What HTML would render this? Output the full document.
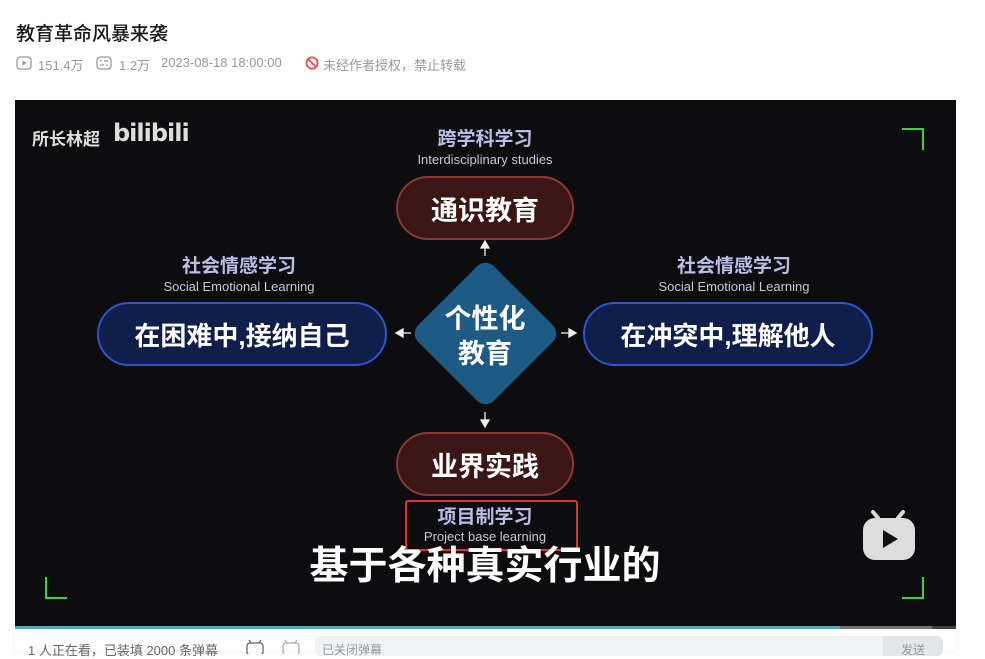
<!DOCTYPE html>
<html><head><meta charset="utf-8"><style>
*{margin:0;padding:0;box-sizing:border-box}
body{width:985px;height:651px;overflow:hidden;background:#fff;font-family:"Liberation Sans","Noto Sans CJK SC",sans-serif;position:relative}
.a{position:absolute}
.title{left:16px;top:19px;font-size:19px;color:#18191c;font-weight:500}
.meta{top:55px;font-size:13px;color:#9499a0}
.v{left:15px;top:100px;width:941px;height:527px;background:#0d0d10;overflow:hidden}
.pill{position:absolute;border-radius:34px;color:#fff;font-weight:bold;display:flex;align-items:center;justify-content:center;font-size:27px}
.red{background:#3a1714;border:2px solid #8a3a33}
.blue{background:#0f1e4a;border:2px solid #2f55c9}
.h{position:absolute;text-align:center;color:#b9bde8;font-weight:bold;font-size:19px}
.s{position:absolute;text-align:center;color:#c6c8d6;font-size:13px}
.c{position:absolute;width:22px;height:22px;border-color:#3fd24a;border-style:solid;border-width:0}
</style></head><body>
<div class="a title">教育革命风暴来袭</div>
<svg class="a" style="left:16px;top:56px" width="16" height="14"><rect x="1" y="1" width="14" height="12" rx="3" fill="none" stroke="#9499a0" stroke-width="1.3"/><path d="M6.5 4.5v5l4-2.5z" fill="#9499a0"/></svg>
<div class="a meta" style="left:38px">151.4万</div>
<svg class="a" style="left:96px;top:56px" width="16" height="14"><rect x="1" y="1" width="14" height="12" rx="3" fill="none" stroke="#9499a0" stroke-width="1.3"/><path d="M4 5h2M8 5h4M4 9h4M10 9h2" stroke="#9499a0" stroke-width="1.3"/></svg>
<div class="a meta" style="left:119px">1.2万</div>
<div class="a meta" style="left:161px">2023-08-18 18:00:00</div>
<svg class="a" style="left:305px;top:56px" width="14" height="14"><circle cx="7" cy="7" r="5.6" fill="none" stroke="#f04a4a" stroke-width="1.8"/><path d="M3 3l8 8" stroke="#f04a4a" stroke-width="1.8"/></svg>
<div class="a meta" style="left:323px">未经作者授权，禁止转载</div>

<div class="a v">
 <div class="a" style="left:17px;top:25px;color:#ddd;font-size:17px;font-weight:bold">所长林超</div>
 <div class="a" style="left:98px;top:19px;color:#ddd;font-size:24px;font-weight:bold;letter-spacing:-1px;font-family:'DejaVu Sans',sans-serif">bilibili</div>
 <div class="c" style="left:887px;top:28px;border-top-width:2px;border-right-width:2px"></div>
 <div class="c" style="left:30px;top:477px;border-bottom-width:2px;border-left-width:2px"></div>
 <div class="c" style="left:887px;top:477px;border-bottom-width:2px;border-right-width:2px"></div>

 <div class="h" style="left:370px;width:200px;top:24px">跨学科学习</div>
 <div class="s" style="left:370px;width:200px;top:52px">Interdisciplinary studies</div>
 <div class="pill red" style="left:381px;top:76px;width:178px;height:64px">通识教育</div>

 <div class="h" style="left:124px;width:200px;top:151px">社会情感学习</div>
 <div class="s" style="left:114px;width:220px;top:179px">Social Emotional Learning</div>
 <div class="pill blue" style="left:82px;top:202px;width:290px;height:64px;font-size:26px">在困难中,接纳自己</div>

 <div class="h" style="left:619px;width:200px;top:151px">社会情感学习</div>
 <div class="s" style="left:609px;width:220px;top:179px">Social Emotional Learning</div>
 <div class="pill blue" style="left:568px;top:202px;width:290px;height:64px;font-size:26px">在冲突中,理解他人</div>

 <div class="a" style="left:417px;top:180px;width:107px;height:107px;background:#1d5b85;border-radius:12px;transform:rotate(45deg)"></div>
 <div class="a" style="left:400px;top:202px;width:140px;text-align:center;color:#fff;font-weight:bold;font-size:27px;line-height:35px">个性化<br>教育</div>
 <svg class="a" style="left:0;top:0" width="941" height="527"><g stroke="#eee" stroke-width="1.3" fill="#eee">
 <path d="M470 142v14"/><path d="M466 148l4-7 4 7z"/>
 <path d="M470 312v14"/><path d="M466 320l4 7 4-7z"/>
 <path d="M382 233h14"/><path d="M388 229l-7 4 7 4z"/>
 <path d="M546 233h14"/><path d="M554 229l7 4-7 4z"/></g></svg>

 <div class="pill red" style="left:381px;top:332px;width:178px;height:64px">业界实践</div>
 <div class="h" style="left:370px;width:200px;top:402px">项目制学习</div>
 <div class="s" style="left:370px;width:200px;top:429px">Project base learning</div>
 <div class="a" style="left:390px;top:400px;width:173px;height:51px;border:2px solid #e0332c;border-radius:3px"></div>
 <div class="a" style="left:260px;top:435px;width:420px;text-align:center;color:#fff;font-weight:bold;font-size:39px">基于各种真实行业的</div>

 <svg class="a" style="left:846px;top:408px" width="58" height="56"><path d="M17 10l-5-6M37 10l5-6" stroke="#ddd" stroke-width="4" stroke-linecap="round"/><rect x="2" y="10" width="52" height="42" rx="12" fill="#ddd"/><path d="M22 22v18l15-9z" fill="#111"/></svg>
</div>
<div class="a" style="left:15px;top:626px;width:825px;height:3px;background:#5fa6c8"></div>
<div class="a" style="left:840px;top:626px;width:92px;height:3px;background:#777"></div>
<div class="a" style="left:932px;top:626px;width:24px;height:3px;background:#444"></div>
<div class="a" style="left:15px;top:629px;width:941px;height:22px;background:#fff;box-shadow:0 0 4px rgba(0,0,0,.08)"></div>
<div class="a" style="left:28px;top:640px;font-size:13px;color:#61666d">1 人正在看，已装填 2000 条弹幕</div>
<svg class="a" style="left:245px;top:640px" width="60" height="14"><g fill="none" stroke="#61666d" stroke-width="1.3"><path d="M6 3l-2-3M14 3l2-3"/><rect x="2" y="3" width="16" height="12" rx="3"/></g><g fill="none" stroke="#aaa" stroke-width="1.3"><path d="M42 3l-2-3M50 3l2-3"/><rect x="38" y="3" width="16" height="12" rx="3"/></g></svg>
<div class="a" style="left:315px;top:636px;width:628px;height:20px;background:#f1f2f3;border-radius:6px"></div>
<div class="a" style="left:322px;top:641px;font-size:12px;color:#9499a0">已关闭弹幕</div>
<div class="a" style="left:883px;top:636px;width:60px;height:20px;background:#e3e5e7;border-radius:0 6px 6px 0;color:#9499a0;font-size:12px;text-align:center;padding-top:5px">发送</div>
</body></html>
